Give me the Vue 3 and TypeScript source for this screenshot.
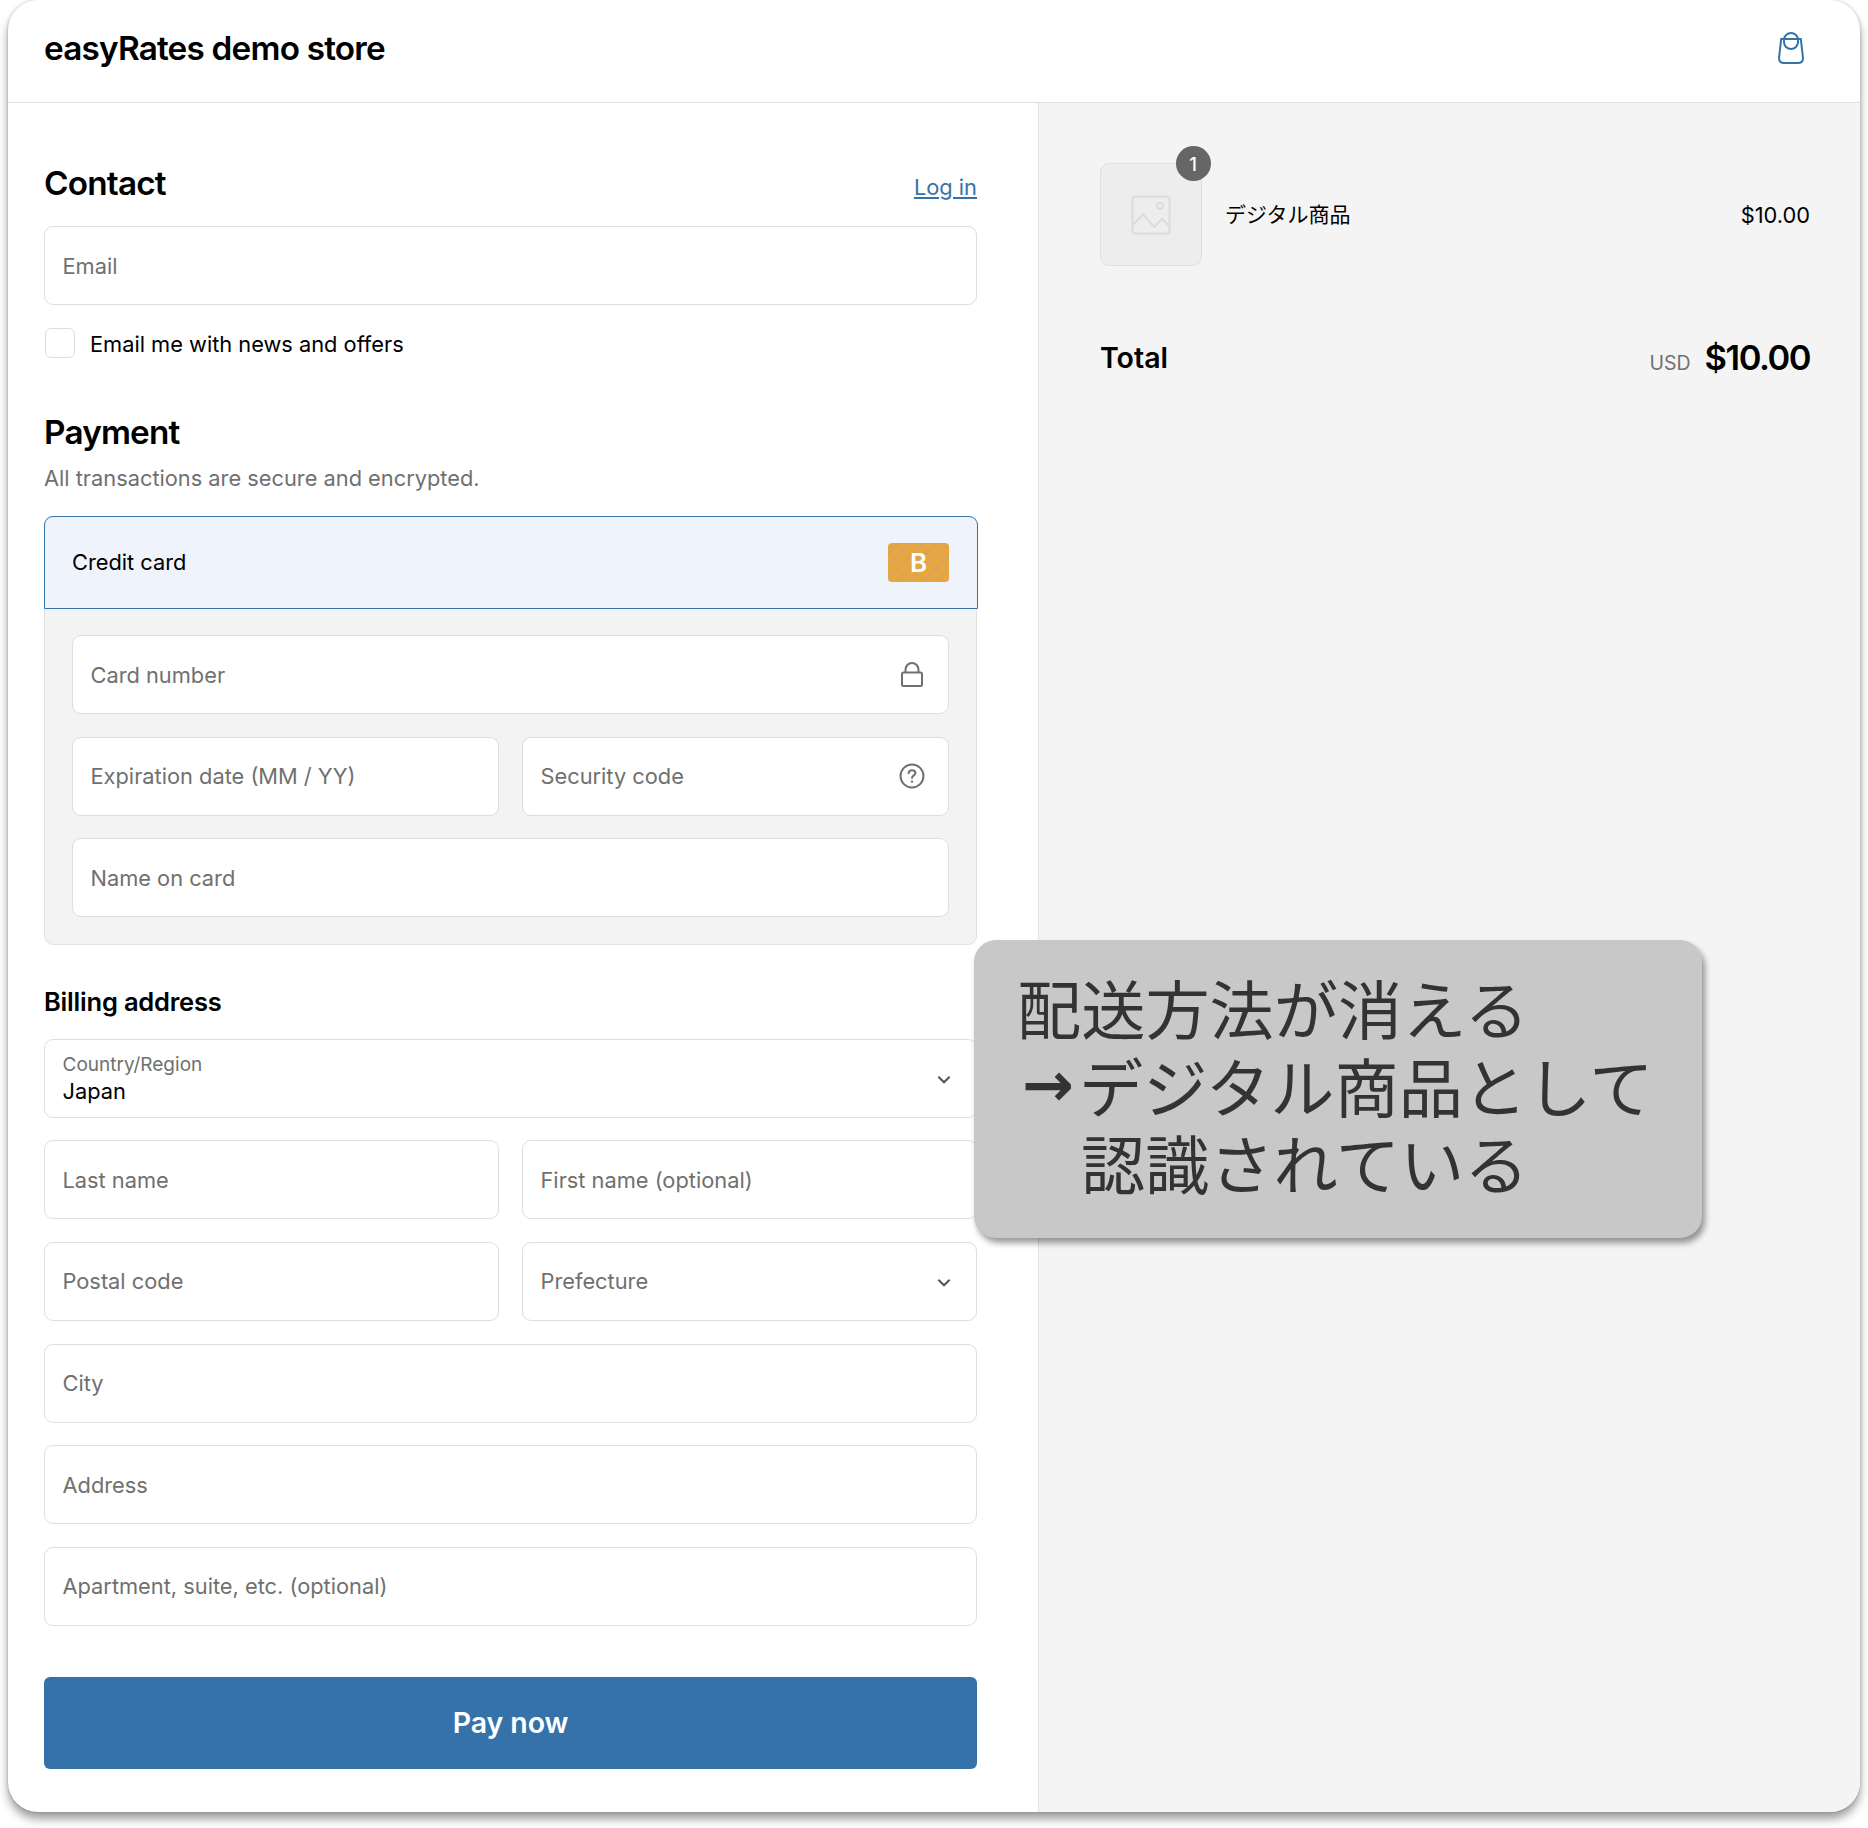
<script setup lang="ts">
const chevron = 'M1 1.5 L6 6.5 L11 1.5'
</script>

<template>
  <div class="page">
    <div class="window">
      <header class="top">
        <div class="brand">easyRates demo store</div>
        <svg class="bag" viewBox="0 0 26 32" width="26" height="32" fill="none" stroke="#3572aa" stroke-width="2">
          <path d="M3.2 7 H22.8 L25 26 C25 29 23 31 20 31 H6 C3 31 1 29 1 26 Z" />
          <rect x="6" y="1" width="14" height="16" rx="7" />
        </svg>
      </header>

      <div class="columns">
        <main class="left">
          <div class="contact-head">
            <h2 class="h">Contact</h2>
            <a class="login">Log in</a>
          </div>
          <div class="field">Email</div>
          <label class="check"><span class="box"></span><span class="check-text">Email me with news and offers</span></label>

          <h2 class="h payment">Payment</h2>
          <p class="sub">All transactions are secure and encrypted.</p>

          <div class="method">
            <span>Credit card</span>
            <span class="bogus">B</span>
          </div>
          <div class="cardbox">
            <div class="field icon-field">
              Card number
              <svg class="lock" viewBox="0 0 22 25" width="22" height="25" fill="none" stroke="#707070" stroke-width="2">
                <rect x="1" y="10.5" width="20" height="13.5" rx="1.5" />
                <path d="M4.5 10.5 V8 C4.5 4 7.2 1 11 1 C14.8 1 17.5 4 17.5 8 V10.5" />
              </svg>
            </div>
            <div class="two">
              <div class="field">Expiration date (MM / YY)</div>
              <div class="field icon-field">
                Security code
                <svg class="help" viewBox="0 0 26 26" width="26" height="26" fill="none" stroke="#707070" stroke-width="2">
                  <circle cx="13" cy="13" r="11.5" />
                  <path d="M9.6 10.2 C9.8 8.2 11.2 7.2 13 7.2 C15 7.2 16.4 8.4 16.4 10 C16.4 12.4 13 12.4 13 15" stroke-linecap="round" />
                  <circle cx="13" cy="18.6" r="0.8" fill="#707070" stroke-width="1" />
                </svg>
              </div>
            </div>
            <div class="field">Name on card</div>
          </div>

          <h3 class="billing">Billing address</h3>
          <div class="stack">
            <div class="field select-field">
              <div class="labelled">
                <span class="tiny">Country/Region</span>
                <span class="value">Japan</span>
              </div>
              <svg class="chev" viewBox="0 0 12 8" width="14" height="9" fill="none" stroke="#555" stroke-width="1.8"><path :d="chevron" /></svg>
            </div>
            <div class="two">
              <div class="field">Last name</div>
              <div class="field">First name (optional)</div>
            </div>
            <div class="two">
              <div class="field">Postal code</div>
              <div class="field select-field">
                Prefecture
                <svg class="chev" viewBox="0 0 12 8" width="14" height="9" fill="none" stroke="#555" stroke-width="1.8"><path :d="chevron" /></svg>
              </div>
            </div>
            <div class="field">City</div>
            <div class="field">Address</div>
            <div class="field">Apartment, suite, etc. (optional)</div>
          </div>

          <button class="pay">Pay now</button>
        </main>

        <aside class="right">
          <div class="item">
            <div class="thumb">
              <svg viewBox="0 0 40 40" width="40" height="40" fill="none" stroke="#dcdcdc" stroke-width="2">
                <rect x="1.5" y="1.5" width="37" height="37" rx="1.5" />
                <path d="M2 30 L12 19 L23 32 L31 24 L38 31" />
                <circle cx="29" cy="11" r="3" />
              </svg>
              <span class="qty">1</span>
            </div>
            <span class="name">デジタル商品</span>
            <span class="price">$10.00</span>
          </div>
          <div class="total">
            <span class="total-label">Total</span>
            <span class="total-amt"><span class="usd">USD</span><span class="big">$10.00</span></span>
          </div>
        </aside>
      </div>

      <div class="note">
        <div>配送方法が消える</div>
        <div class="arrow-line"><span class="arrow">→</span>デジタル商品として</div>
        <div class="indent">認識されている</div>
      </div>
    </div>
  </div>
</template>

<style>
html, body { margin: 0; background: #fff; }
</style>

<style scoped>
.page {
  box-sizing: border-box;
  width: 1868px;
  height: 1828px;
  padding: 0 8px;
}
.window {
  position: relative;
  box-sizing: border-box;
  width: 1852px;
  height: 1812px;
  border-radius: 30px;
  background: #fff;
  box-shadow: 0 7px 10px rgba(0, 0, 0, 0.38), 0 0 3px rgba(0, 0, 0, 0.22);
  font-family: Inter, "Noto Sans CJK JP", sans-serif;
  font-size: 21.8px;
  color: #000;
}
.top {
  box-sizing: border-box;
  height: 103px;
  display: flex;
  align-items: center;
  justify-content: space-between;
  padding: 0 56px 6px 36px;
  border-bottom: 1.5px solid #dedede;
}
.brand { font-size: 33.3px; font-weight: 600; letter-spacing: -0.8px; }
.columns {
  display: grid;
  grid-template-columns: 1031px 1fr;
  height: 1709px;
}
.left {
  box-sizing: border-box;
  padding: 0 61px 0 36px;
  border-right: 1.5px solid #e3e3e3;
}
.right {
  background: #f4f4f4;
  border-radius: 0 0 30px 0;
  padding: 60px 50px 0 61px;
}
.contact-head {
  margin-top: 60px;
  height: 40px;
  margin-bottom: 23px;
  display: flex;
  align-items: center;
  justify-content: space-between;
}
.h { margin: 0; font-size: 33.3px; font-weight: 600; line-height: 40px; letter-spacing: -0.8px; }
.login { color: #3572aa; text-decoration: underline; margin-top: 8px; }
.field {
  box-sizing: border-box;
  height: 79px;
  display: flex;
  align-items: center;
  padding: 0 17.5px;
  border: 1.5px solid #dedede;
  border-radius: 9px;
  background: #fff;
  color: #707070;
}
.icon-field, .select-field { justify-content: space-between; }
.check {
  margin-top: 23px;
  height: 30px;
  display: flex;
  align-items: center;
  gap: 15px;
}
.check-text { margin-top: 2px; }
.box {
  box-sizing: border-box;
  width: 30px;
  height: 30px;
  margin-left: 1px;
  border: 1.5px solid #dedede;
  border-radius: 6px;
  background: #fff;
}
.payment { margin-top: 54px; }
.sub { margin: 11px 0 0; line-height: 30px; color: #707070; }
.method {
  box-sizing: border-box;
  height: 93px;
  margin: 23px -1px 0 0;
  display: flex;
  align-items: center;
  justify-content: space-between;
  padding: 0 28px 1px 27px;
  background: #eff4fc;
  border: 1.5px solid #3572aa;
  border-radius: 9px 9px 0 0;
}
.bogus {
  width: 61px;
  height: 39px;
  display: flex;
  align-items: center;
  justify-content: center;
  border-radius: 4px;
  color: #fff;
  font-size: 26px;
  font-weight: 600;
  background: repeating-linear-gradient(135deg, #e8a63c 0 5px, #dca651 5px 9px);
}
.cardbox {
  box-sizing: border-box;
  height: 335.5px;
  padding: 26px 27px 0;
  display: flex;
  flex-direction: column;
  gap: 22.5px;
  background: #f3f3f3;
  border: 1.5px solid #e1e1e1;
  border-top: 0;
  border-radius: 0 0 9px 9px;
}
.two {
  display: grid;
  grid-template-columns: 1fr 1fr;
  gap: 23px;
}
.billing {
  margin: 37px 0 17px;
  font-size: 25.5px;
  font-weight: 600;
  line-height: 40px;
  letter-spacing: -0.2px;
}
.stack { display: flex; flex-direction: column; gap: 22.7px; }
.labelled { display: flex; flex-direction: column; }
.tiny { font-size: 19px; line-height: 27px; color: #707070; }
.value { color: #000; line-height: 27px; }
.chev { margin: 2px 8px 0 0; }
.lock { margin-right: 8px; }
.help { margin-right: 6px; }
.pay {
  display: block;
  width: 100%;
  height: 92px;
  margin-top: 51px;
  border: 0;
  border-radius: 6px;
  background: #3572aa;
  color: #fff;
  font-family: inherit;
  font-size: 28.5px;
  font-weight: 600;
  letter-spacing: -0.1px;
}
.item { display: flex; align-items: center; line-height: 30px; }
.thumb {
  box-sizing: border-box;
  position: relative;
  width: 102px;
  height: 103px;
  display: flex;
  align-items: center;
  justify-content: center;
  background: #ededed;
  border: 1.5px solid #e0e0e0;
  border-radius: 9px;
}
.qty {
  position: absolute;
  top: -18px;
  right: -9.5px;
  width: 35px;
  height: 35px;
  border-radius: 50%;
  background: #666;
  color: #fff;
  font-size: 18.5px;
  font-weight: 500;
  display: flex;
  align-items: center;
  justify-content: center;
}
.name { margin: 1px 0 0 23px; flex: 1; font-size: 21px; line-height: 30px; }
.price { margin-top: 1px; }
.total {
  margin-top: 71px;
  display: flex;
  align-items: center;
  justify-content: space-between;
}
.total-label { font-size: 28.5px; font-weight: 600; }
.total-amt { display: flex; align-items: baseline; gap: 14px; }
.usd { font-size: 19.5px; color: #707070; }
.big { font-size: 34.5px; font-weight: 600; letter-spacing: -1.5px; }
.note {
  position: absolute;
  left: 966px;
  top: 940px;
  box-sizing: border-box;
  width: 728px;
  height: 298px;
  padding: 28px 0 0 43px;
  background: #c8c8c8;
  border-radius: 22px;
  box-shadow: 3px 5px 6px rgba(0, 0, 0, 0.4);
  color: #333;
  font-family: "Noto Sans CJK JP", sans-serif;
  font-size: 64.2px;
  font-weight: 400;
  line-height: 77.5px;
  white-space: nowrap;
}
.arrow-line { display: flex; }
.arrow {
  width: 62px;
  font-family: "DejaVu Sans", sans-serif;
  font-weight: 700;
  font-size: 62px;
  text-align: center;
}
.indent { padding-left: 64px; }
</style>
